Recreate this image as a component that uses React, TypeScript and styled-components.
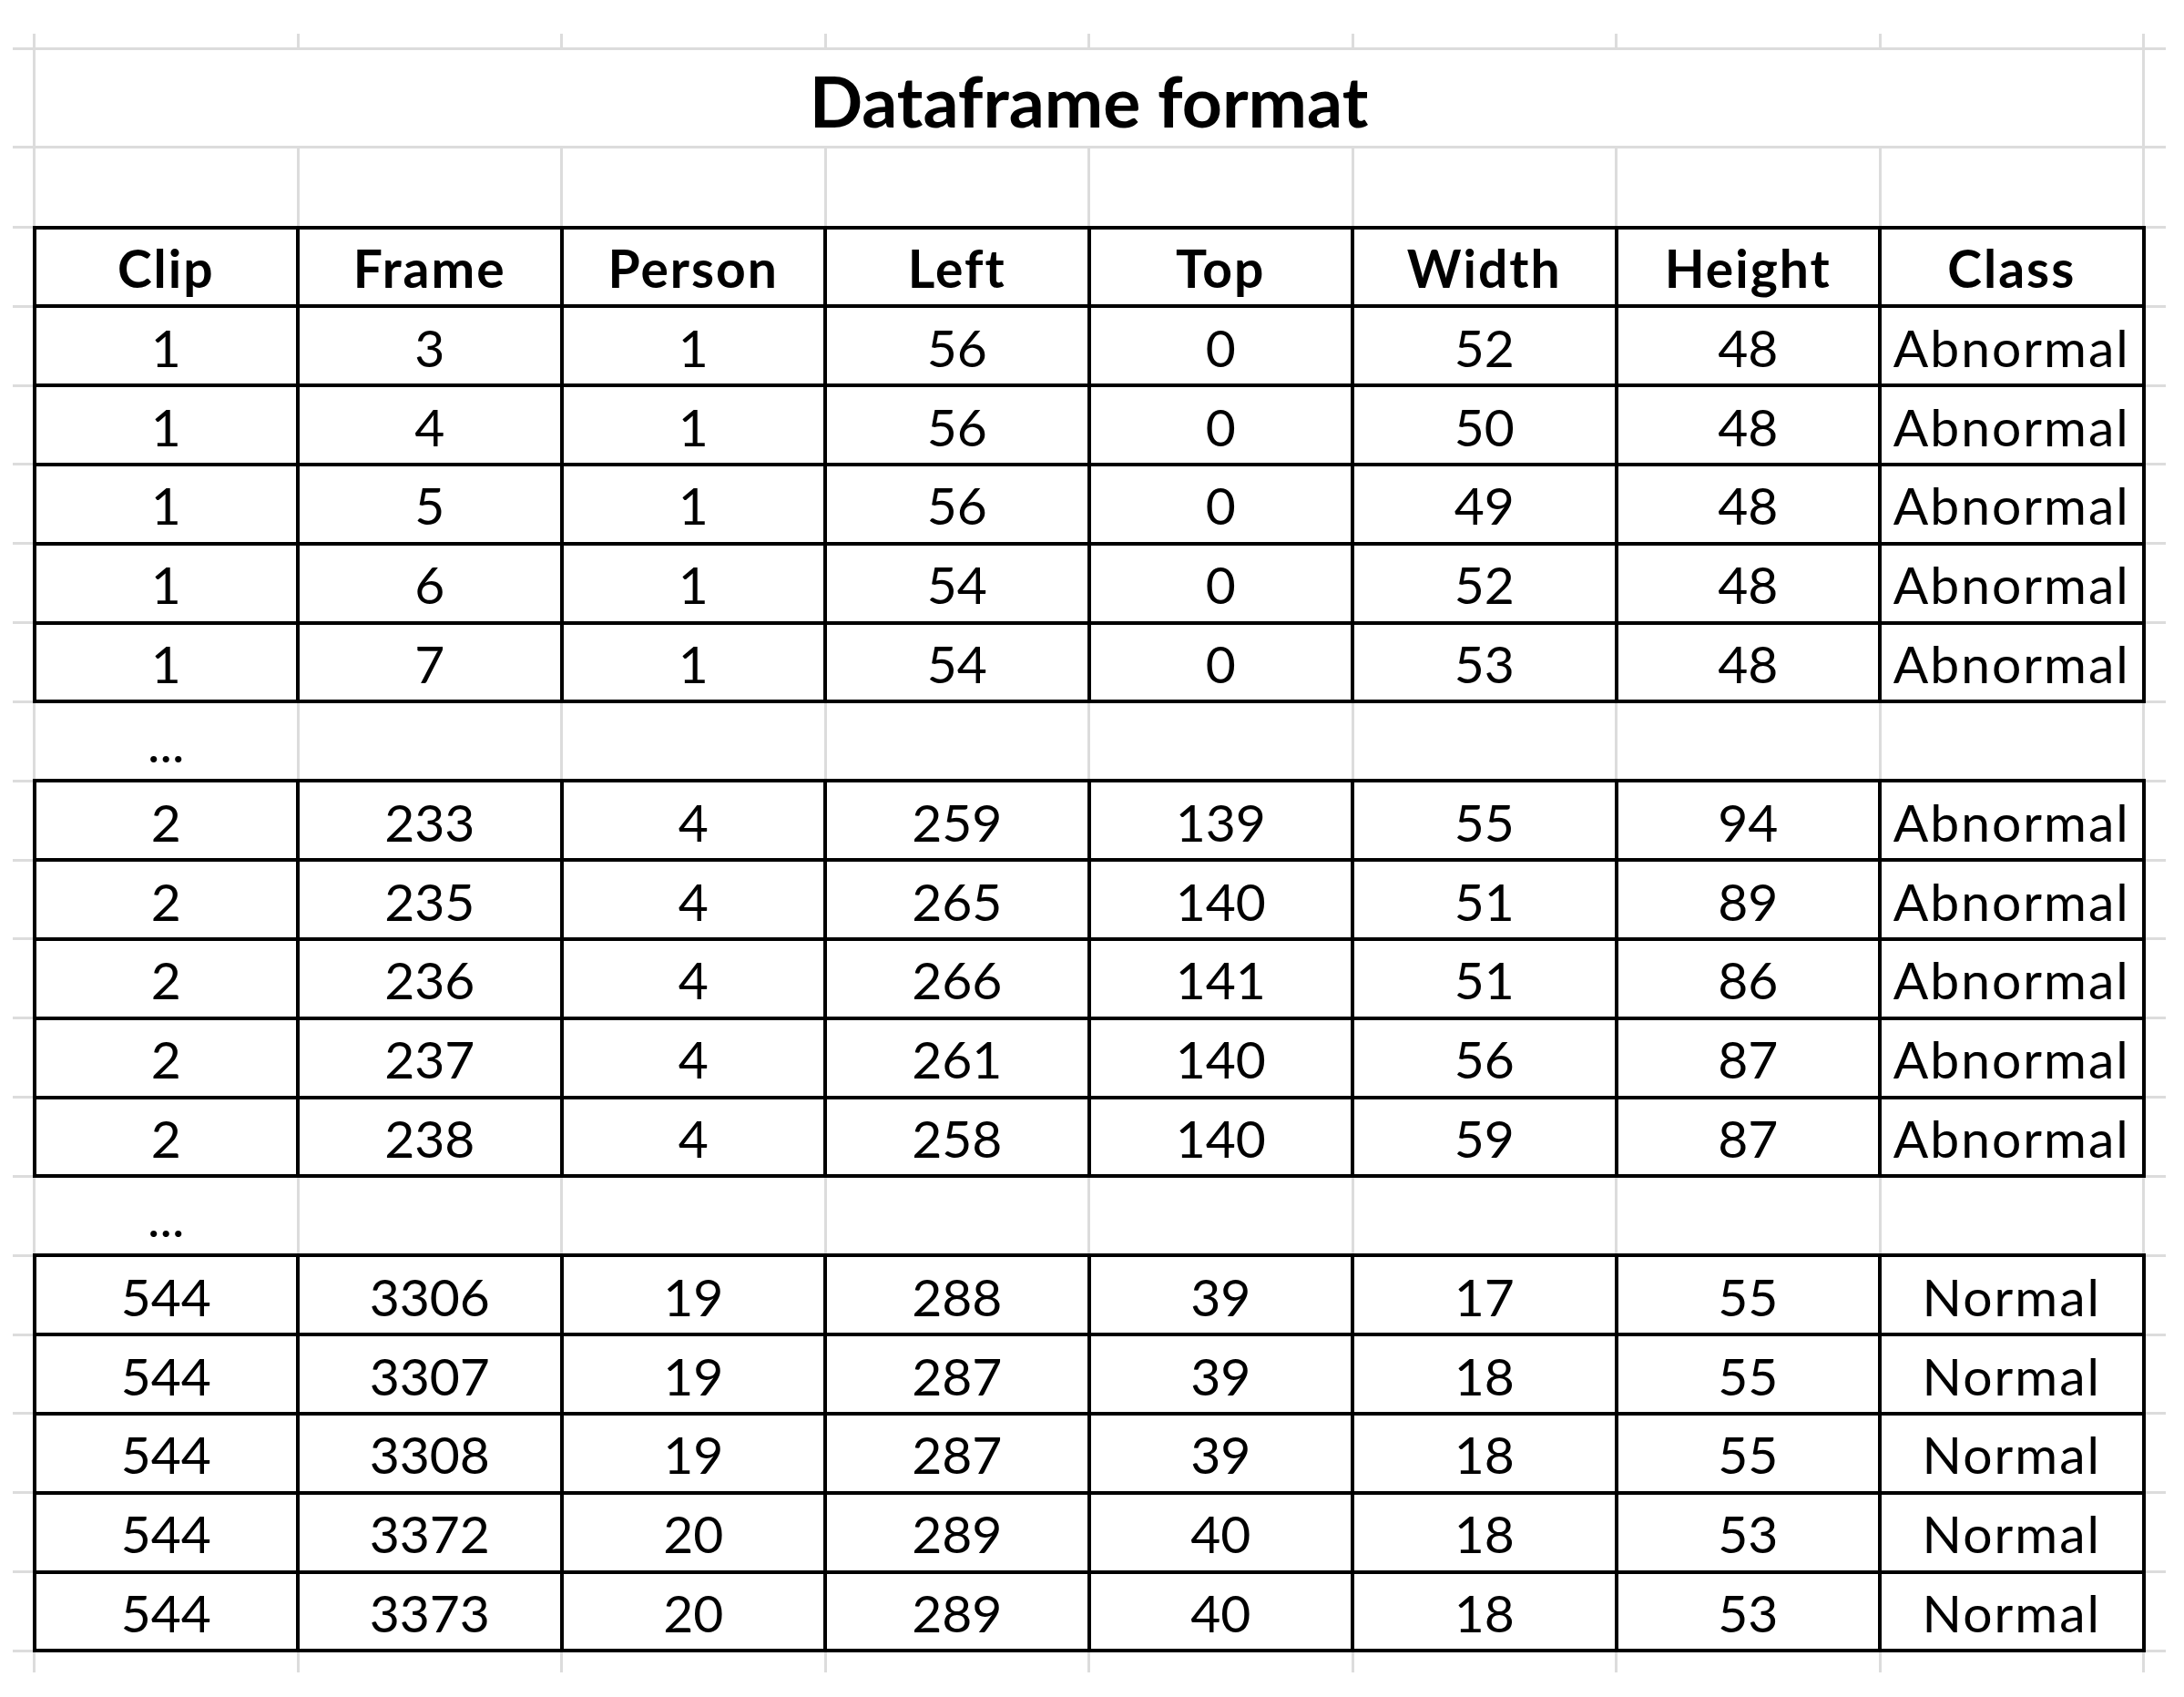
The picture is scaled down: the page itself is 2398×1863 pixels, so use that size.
import React from "react";
import styled, { createGlobalStyle, css } from "styled-components";

const GRID = "#dcdcdc";
const INK = "#000000";

const GlobalStyle = createGlobalStyle`
  html, body {
    margin: 0;
    padding: 0;
    background: #ffffff;
  }
  body {
    font-family: Lato, "Liberation Sans", sans-serif;
    color: ${INK};
  }
`;

const Page = styled.div`
  padding: 37px 0 0 14px;
`;

const Sheet = styled.table`
  border-collapse: collapse;
  table-layout: fixed;
  width: 2364px;
`;

const Row = styled.tr<{ $h: number }>`
  height: ${(p) => p.$h}px;
`;

type Edge = "top" | "bottom" | "left" | "right";

const Stub = styled.td<{ $open?: Edge[] }>`
  padding: 0;
  border: 3px solid ${GRID};
  ${(p) =>
    (p.$open || []).map(
      (e) => css`
        border-${e}: none;
      `
    )}
`;

const Cell = styled.td<{ $boxed?: boolean; $bold?: boolean; $word?: boolean }>`
  padding: 0 0 6px;
  border: 3px solid ${GRID};
  text-align: center;
  vertical-align: bottom;
  font-size: 57px;
  line-height: 1.2;
  font-weight: ${(p) => (p.$bold ? 700 : 400)};
  letter-spacing: ${(p) => (p.$word ? "2px" : "0")};
  white-space: nowrap;
  overflow: visible;
  ${(p) =>
    p.$boxed &&
    css`
      border: 4px solid ${INK};
    `}
`;

const TitleCell = styled.td`
  padding: 0 0 4px;
  border: 3px solid ${GRID};
  text-align: center;
  vertical-align: bottom;
  font-size: 77px;
  line-height: 1.2;
  font-weight: 700;
  white-space: nowrap;
`;

const COLS = 8;
const ROW_H = 86.83;

const header = ["Clip", "Frame", "Person", "Left", "Top", "Width", "Height", "Class"];

const blocks: (string | number)[][][] = [
  [
    [1, 3, 1, 56, 0, 52, 48, "Abnormal"],
    [1, 4, 1, 56, 0, 50, 48, "Abnormal"],
    [1, 5, 1, 56, 0, 49, 48, "Abnormal"],
    [1, 6, 1, 54, 0, 52, 48, "Abnormal"],
    [1, 7, 1, 54, 0, 53, 48, "Abnormal"],
  ],
  [
    [2, 233, 4, 259, 139, 55, 94, "Abnormal"],
    [2, 235, 4, 265, 140, 51, 89, "Abnormal"],
    [2, 236, 4, 266, 141, 51, 86, "Abnormal"],
    [2, 237, 4, 261, 140, 56, 87, "Abnormal"],
    [2, 238, 4, 258, 140, 59, 87, "Abnormal"],
  ],
  [
    [544, 3306, 19, 288, 39, 17, 55, "Normal"],
    [544, 3307, 19, 287, 39, 18, 55, "Normal"],
    [544, 3308, 19, 287, 39, 18, 55, "Normal"],
    [544, 3372, 20, 289, 40, 18, 53, "Normal"],
    [544, 3373, 20, 289, 40, 18, 53, "Normal"],
  ],
];

const range = (n: number) => Array.from({ length: n }, (_, i) => i);

function SheetRow({
  h,
  top,
  bottom,
  children,
}: {
  h: number;
  top?: boolean;
  bottom?: boolean;
  children: React.ReactNode;
}) {
  const extra: Edge[] = [];
  if (top) extra.push("top");
  if (bottom) extra.push("bottom");
  return (
    <Row $h={h}>
      <Stub $open={["left", ...extra]} />
      {children}
      <Stub $open={["right", ...extra]} />
    </Row>
  );
}

function EmptyCells({ open }: { open?: Edge[] }) {
  return (
    <>
      {range(COLS).map((i) => (
        <Stub key={i} $open={open} />
      ))}
    </>
  );
}

function DataRow({ values, bold }: { values: (string | number)[]; bold?: boolean }) {
  return (
    <SheetRow h={ROW_H}>
      {values.map((v, i) => (
        <Cell key={i} $boxed $bold={bold} $word={typeof v === "string"}>
          {v}
        </Cell>
      ))}
    </SheetRow>
  );
}

function GapRow() {
  return (
    <SheetRow h={ROW_H}>
      <Cell>...</Cell>
      {range(COLS - 1).map((i) => (
        <Stub key={i} />
      ))}
    </SheetRow>
  );
}

export default function App() {
  return (
    <>
      <GlobalStyle />
      <Page>
        <Sheet>
          <colgroup>
            <col style={{ width: 23.5 }} />
            {range(COLS).map((i) => (
              <col key={i} style={{ width: 289.5 }} />
            ))}
            <col style={{ width: 24.5 }} />
          </colgroup>
          <tbody>
            <SheetRow h={16.5} top>
              <EmptyCells open={["top"]} />
            </SheetRow>
            <SheetRow h={108}>
              <TitleCell colSpan={COLS}>Dataframe format</TitleCell>
            </SheetRow>
            <SheetRow h={88}>
              <EmptyCells />
            </SheetRow>
            <DataRow values={header} bold />
            {blocks.map((rows, bi) => (
              <React.Fragment key={bi}>
                {bi > 0 && <GapRow />}
                {rows.map((r, ri) => (
                  <DataRow key={ri} values={r} />
                ))}
              </React.Fragment>
            ))}
            <SheetRow h={23.5} bottom>
              <EmptyCells open={["bottom"]} />
            </SheetRow>
          </tbody>
        </Sheet>
      </Page>
    </>
  );
}
